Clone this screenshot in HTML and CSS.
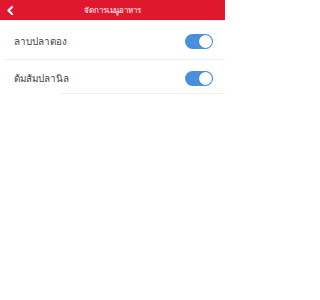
FILE: index.html
```html
<!DOCTYPE html>
<html lang="th">
<head>
<meta charset="utf-8">
<meta name="viewport" content="width=225">
<link rel="stylesheet" href="styles.css">
</head>
<body>
<div class="app">
  <header class="topbar">
    <span class="back"><svg width="8" height="9" viewBox="0 0 8 9"><path d="M6 1 L2.5 4.5 L6 8" fill="none" stroke="#fff" stroke-width="2.2" stroke-linecap="round" stroke-linejoin="round"/></svg></span>
    <span class="title">จัดการเมนูอาหาร</span>
  </header>
  <ul class="list">
    <li class="row first">
      <span class="label">ลาบปลาตอง</span>
      <span class="toggle on"><span class="knob"></span></span>
    </li>
    <li class="row second">
      <span class="label">ต้มส้มปลานิล</span>
      <span class="toggle on"><span class="knob"></span></span>
    </li>
  </ul>
</div>
</body>
</html>
```
FILE: styles.css
```css
html, body { margin: 0; padding: 0; background: #fff; }
body { font-family: "Noto Sans", "DejaVu Sans", sans-serif; height: 300px; overflow: hidden; }
.app { width: 225px; }
.topbar {
  height: 20px;
  background: #e0182d;
  display: flex;
  align-items: center;
  justify-content: center;
  position: relative;
  box-shadow: 0 1px 1px rgba(0,0,0,0.06);
}
.back { position: absolute; left: 6px; top: 6px; height: 9px; display: flex; }
.title { color: #fff; font-size: 8px; line-height: 12px; letter-spacing: -0.1px; }
.list { list-style: none; margin: 0; padding: 0 0 0 4px; }
.row {
  display: flex;
  align-items: center;
  justify-content: space-between;
  height: 34px;
  padding: 0 12px 0 10px;
  border-bottom: 1px solid #eeeeee;
}
.row.first { height: 35px; padding-top: 4px; }
.row.second { border-bottom: none; position: relative; padding-top: 2px; height: 32px; }
.row.second::after { content: ""; position: absolute; left: 56px; right: 0; bottom: 0; height: 1px; background: #f2f2f2; }
.label { font-size: 9.8px; color: #444; }
.toggle {
  width: 28px; height: 15px; border-radius: 8px; background: #4a8fdb;
  position: relative; display: block;
}
.knob {
  position: absolute; right: 1px; top: 1px; width: 13px; height: 13px; border-radius: 50%;
  background: #fff; box-shadow: 0 0 1px rgba(0,0,0,0.3);
}
```
